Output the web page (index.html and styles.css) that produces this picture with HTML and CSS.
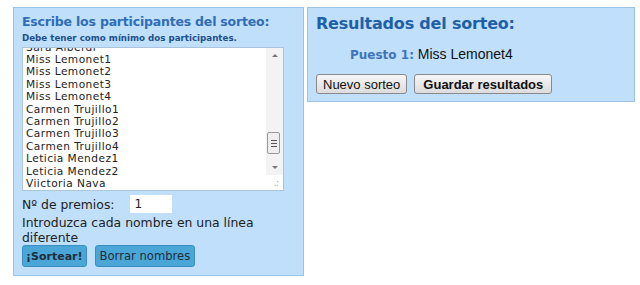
FILE: index.html
```html
<!DOCTYPE html>
<html lang="es">
<head>
<meta charset="utf-8">
<title>Sorteo</title>
<link rel="stylesheet" href="styles.css">
</head>
<body>
<div class="page">
  <div class="panel left">
    <h2 class="title">Escribe los participantes del sorteo:</h2>
    <div class="sub">Debe tener como mínimo dos participantes.</div>
    <div class="textarea">
      <div class="lines">
        <div class="cutwrap"><div class="line cut">Sara Alberdi</div></div>
        <div class="line">Miss Lemonet1</div>
        <div class="line">Miss Lemonet2</div>
        <div class="line">Miss Lemonet3</div>
        <div class="line">Miss Lemonet4</div>
        <div class="line">Carmen Trujillo1</div>
        <div class="line">Carmen Trujillo2</div>
        <div class="line">Carmen Trujillo3</div>
        <div class="line">Carmen Trujillo4</div>
        <div class="line">Leticia Mendez1</div>
        <div class="line">Leticia Mendez2</div>
        <div class="line">Viictoria Nava</div>
      </div>
      <div class="scrollbar">
        <div class="arrow up"></div>
        <div class="track"><div class="thumb"><span></span><span></span><span></span></div></div>
        <div class="arrow down"></div>
      </div>
      <div class="grip">.:</div>
    </div>
    <div class="prizes"><span>Nº de premios:</span><span class="input">1</span></div>
    <div class="hint">Introduzca cada nombre en una línea diferente</div>
    <div class="actions">
      <button class="btn blue bold">¡Sortear!</button>
      <button class="btn blue">Borrar nombres</button>
    </div>
  </div>
  <div class="panel right">
    <h2 class="title big">Resultados del sorteo:</h2>
    <div class="result"><span class="pos">Puesto 1:</span> Miss Lemonet4</div>
    <div class="actions2">
      <button class="btn gray">Nuevo sorteo</button>
      <button class="btn gray bold">Guardar resultados</button>
    </div>
  </div>
</div>
</body>
</html>
```
FILE: styles.css
```css
html, body { margin: 0; padding: 0; background: #ffffff; }
body { font-family: "DejaVu Sans", Verdana, sans-serif; }
.page { display: flex; align-items: flex-start; gap: 3px; padding: 7px 0 0 13px; }
.panel { background: #bfdffa; border: 1px solid #9cc3e6; box-sizing: border-box; }
.left { width: 291px; height: 269px; padding: 6px 8px 0 8px; }
.right { width: 328px; height: 95px; padding: 6px 8px 0 8px; }
.title { margin: 0; font-size: 12.5px; font-weight: bold; color: #2f6db5; letter-spacing: -0.2px; }
.title.big { font-size: 16px; color: #1f5fa8; }
.sub { font-size: 8.7px; font-weight: bold; color: #1d4f8a; margin-top: 4px; }
.textarea { position: relative; background: #fff; border: 1px solid #a9c4dc; width: 262px; height: 144px; margin-top: 4px; box-sizing: border-box; overflow: hidden; display: flex; }
.lines { flex: 1; padding: 0 0 0 3px; font-family: "DejaVu Sans", Verdana, sans-serif; font-size: 10.6px; letter-spacing: 0.45px; line-height: 12.4px; color: #222; }
.cutwrap { height: 5px; overflow: hidden; }
.cut { margin-top: -7.4px; }
.scrollbar { width: 17px; height: 127px; display: flex; flex-direction: column; background: #f3f3f3; }
.arrow { height: 15px; position: relative; }
.arrow.up::after { content: ""; position: absolute; left: 6px; top: 6px; border: 3px solid transparent; border-bottom: 3px solid #777; border-top: 0; }
.arrow.down::after { content: ""; position: absolute; left: 6px; top: 6px; border: 3px solid transparent; border-top: 3px solid #777; border-bottom: 0; }
.track { flex: 1; display: flex; flex-direction: column; justify-content: flex-end; padding-bottom: 6px; }
.thumb { width: 13px; height: 22px; margin-left: 1px; box-sizing: border-box; border: 1px solid #999; border-radius: 2px; background: #eee; display: flex; flex-direction: column; justify-content: center; align-items: center; gap: 2px; }
.thumb span { width: 6px; height: 1px; background: #555; }
.grip { position: absolute; right: 4px; bottom: 2px; font-size: 8px; color: #999; }
.prizes { display: flex; align-items: center; gap: 15px; margin-top: 4px; font-size: 12.4px; color: #222; }
.input { background: #fff; width: 42px; height: 18px; box-sizing: border-box; padding: 2px 0 0 5px; font-size: 12px; }
.hint { font-size: 12.4px; color: #222; line-height: 15px; margin-top: 2px; width: 260px; }
.actions { display: flex; gap: 8px; margin-top: 0; }
.btn { font-family: "DejaVu Sans", Verdana, sans-serif; font-size: 11px; padding: 0 3px; height: 22px; border-radius: 3px; cursor: pointer; }
.btn.blue { background: #4ba6d8; border: 1px solid #3b8fc0; color: #1e2e3a; }
.btn.blue:not(.bold) { font-size: 11.6px; padding: 0 4px; }
.bold { font-weight: bold; }
.result { margin: 13px 0 0 34px; font-family: "Liberation Sans", Arial, sans-serif; font-size: 14px; color: #111; }
.pos { font-family: "DejaVu Sans", Verdana, sans-serif; font-weight: bold; color: #3e74b8; font-size: 12px; }
.actions2 { display: flex; gap: 7px; margin-top: 12px; }
.btn.gray { font-family: "Liberation Sans", Arial, sans-serif; font-size: 13px; height: 20px; background: linear-gradient(#f6f6f6, #dcdcdc); border: 1px solid #8a8a8a; color: #111; padding: 0 6px; }
.btn.gray.bold { padding: 0 8px; }
```
